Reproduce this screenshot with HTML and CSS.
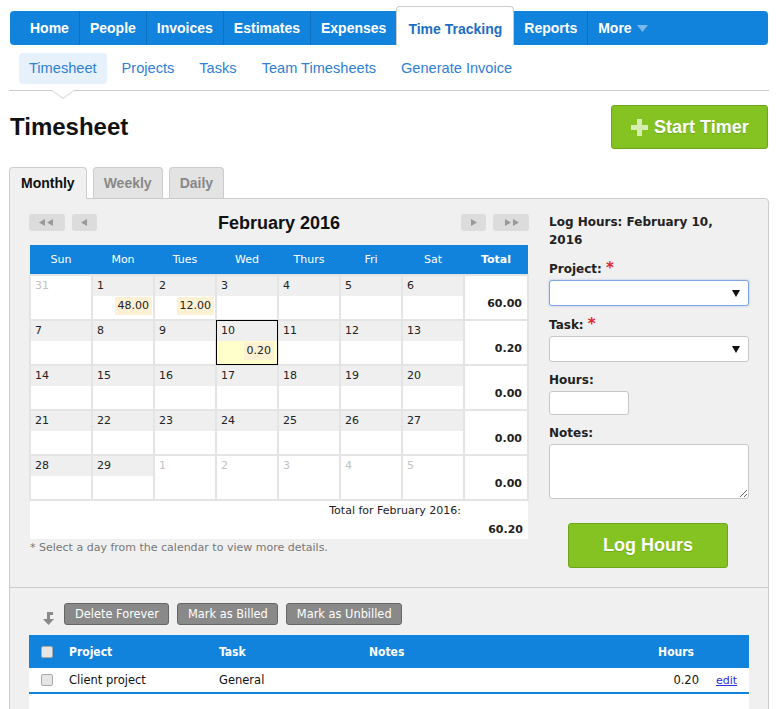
FILE: index.html
```html
<!DOCTYPE html>
<html>
    <head>
        <title>Timesheet</title>
        <meta name="viewport" content="width=device-width, initial-scale=1.0">
        <link rel="stylesheet" href="styles.css">
    </head>
    <body>
        <div class="page">

            <!-- main navigation -->
            <ul class="main-nav">
                <li>Home</li>
                <li>People</li>
                <li>Invoices</li>
                <li>Estimates</li>
                <li>Expenses</li>
                <li class="active">Time Tracking</li>
                <li>Reports</li>
                <li class="more">More
                    <svg width="11" height="7" viewBox="0 0 11 7"><polygon points="0,0 11,0 5.5,7" fill="#7cb8ec"/></svg>
                </li>
            </ul>

            <ul class="sub-nav">
                <li class="active">Timesheet</li>
                <li>Projects</li>
                <li>Tasks</li>
                <li>Team Timesheets</li>
                <li>Generate Invoice</li>
            </ul>

            <div class="title-row">
                <h1>Timesheet</h1>
                <button class="btn-green btn-timer">
                    <svg width="17" height="17" viewBox="0 0 17 17"><path d="M6 0h5v6h6v5h-6v6H6v-6H0V6h6z" fill="#d6edb4"/></svg>
                    Start Timer
                </button>
            </div>

            <div class="tabs">
                <span class="tab active">Monthly</span>
                <span class="tab">Weekly</span>
                <span class="tab">Daily</span>
            </div>

            <div class="panel">
                <div class="panel-top">

                    <div class="calendar">
                        <div class="cal-nav">
                            <span class="cal-btn wide">
                                <svg width="16" height="7" viewBox="0 0 16 7"><polygon points="0,3.5 6,0 6,7" fill="#999"/><polygon points="8,3.5 14,0 14,7" fill="#999"/></svg>
                            </span>
                            <span class="cal-btn">
                                <svg width="7" height="7" viewBox="0 0 7 7"><polygon points="0,3.5 6,0 6,7" fill="#999"/></svg>
                            </span>
                            <span class="cal-title">February 2016</span>
                            <span class="cal-btn">
                                <svg width="7" height="7" viewBox="0 0 7 7"><polygon points="1,0 7,3.5 1,7" fill="#999"/></svg>
                            </span>
                            <span class="cal-btn wide">
                                <svg width="16" height="7" viewBox="0 0 16 7"><polygon points="2,0 8,3.5 2,7" fill="#999"/><polygon points="10,0 16,3.5 10,7" fill="#999"/></svg>
                            </span>
                        </div>

                        <table class="cal">
                            <thead>
                                <tr>
                                    <th>Sun</th><th>Mon</th><th>Tues</th><th>Wed</th><th>Thurs</th><th>Fri</th><th>Sat</th><th class="total">Total</th>
                                </tr>
                            </thead>
                            <tbody>
                                <tr>
                                    <td class="other"><div class="day">31</div></td>
                                    <td><div class="day">1</div><div class="val"><span>48.00</span></div></td>
                                    <td><div class="day">2</div><div class="val"><span>12.00</span></div></td>
                                    <td><div class="day">3</div></td>
                                    <td><div class="day">4</div></td>
                                    <td><div class="day">5</div></td>
                                    <td><div class="day">6</div></td>
                                    <td class="total">60.00</td>
                                </tr>
                                <tr>
                                    <td><div class="day">7</div></td>
                                    <td><div class="day">8</div></td>
                                    <td><div class="day">9</div></td>
                                    <td class="selected"><div class="day">10</div><div class="val"><span>0.20</span></div></td>
                                    <td><div class="day">11</div></td>
                                    <td><div class="day">12</div></td>
                                    <td><div class="day">13</div></td>
                                    <td class="total">0.20</td>
                                </tr>
                                <tr>
                                    <td><div class="day">14</div></td>
                                    <td><div class="day">15</div></td>
                                    <td><div class="day">16</div></td>
                                    <td><div class="day">17</div></td>
                                    <td><div class="day">18</div></td>
                                    <td><div class="day">19</div></td>
                                    <td><div class="day">20</div></td>
                                    <td class="total">0.00</td>
                                </tr>
                                <tr>
                                    <td><div class="day">21</div></td>
                                    <td><div class="day">22</div></td>
                                    <td><div class="day">23</div></td>
                                    <td><div class="day">24</div></td>
                                    <td><div class="day">25</div></td>
                                    <td><div class="day">26</div></td>
                                    <td><div class="day">27</div></td>
                                    <td class="total">0.00</td>
                                </tr>
                                <tr>
                                    <td><div class="day">28</div></td>
                                    <td><div class="day">29</div></td>
                                    <td class="other"><div class="day">1</div></td>
                                    <td class="other"><div class="day">2</div></td>
                                    <td class="other"><div class="day">3</div></td>
                                    <td class="other"><div class="day">4</div></td>
                                    <td class="other"><div class="day">5</div></td>
                                    <td class="total">0.00</td>
                                </tr>
                            </tbody>
                            <tfoot>
                                <tr>
                                    <td colspan="7" class="month-label">Total for February 2016:</td>
                                    <td class="month-total">60.20</td>
                                </tr>
                            </tfoot>
                        </table>
                        <p class="note">* Select a day from the calendar to view more details.</p>
                    </div>

                    <form class="log-form">
                        <h3>Log Hours: February 10, 2016</h3>
                        <div class="field">
                            <label>Project: <span class="req">*</span></label>
                            <div class="select focus">
                                <select></select>
                                <svg class="caret" width="8" height="7" viewBox="0 0 8 7"><polygon points="0,0 8,0 4,7" fill="#111"/></svg>
                            </div>
                        </div>
                        <div class="field">
                            <label>Task: <span class="req">*</span></label>
                            <div class="select">
                                <select></select>
                                <svg class="caret" width="8" height="7" viewBox="0 0 8 7"><polygon points="0,0 8,0 4,7" fill="#111"/></svg>
                            </div>
                        </div>
                        <div class="field">
                            <label>Hours:</label>
                            <input type="text" class="hours">
                        </div>
                        <div class="field">
                            <label>Notes:</label>
                            <textarea class="notes"></textarea>
                        </div>
                        <button type="button" class="btn-green btn-log">Log Hours</button>
                    </form>
                </div>

                <div class="panel-bottom">
                    <div class="actions">
                        <span class="apply-icon">
                            <svg width="13" height="13" viewBox="0 0 13 13"><path d="M5 0h6v3H8v4h4l-5.5 6L1 7h4z" fill="#8a8a8a"/></svg>
                        </span>
                        <button type="button" class="btn-grey">Delete Forever</button>
                        <button type="button" class="btn-grey">Mark as Billed</button>
                        <button type="button" class="btn-grey">Mark as Unbilled</button>
                    </div>

                    <table class="entries">
                        <thead>
                            <tr>
                                <th class="col-check"><input type="checkbox"></th>
                                <th class="col-project">Project</th>
                                <th class="col-task">Task</th>
                                <th>Notes</th>
                                <th class="col-hours">Hours</th>
                                <th class="col-edit"></th>
                            </tr>
                        </thead>
                        <tbody>
                            <tr class="entry">
                                <td class="col-check"><input type="checkbox"></td>
                                <td>Client project</td>
                                <td>General</td>
                                <td></td>
                                <td class="col-hours">0.20</td>
                                <td class="col-edit"><a href="#">edit</a></td>
                            </tr>
                            <tr class="spacer"><td colspan="6"></td></tr>
                        </tbody>
                    </table>
                </div>
            </div>
        </div>
    </body>
</html>
```

FILE: styles.css
```css
/* ---- General ---- */
* {
    box-sizing: border-box;
}

body {
    margin: 0;
    background-color: #fff;
    color: #222;
    font-family: 'DejaVu Sans', Verdana, sans-serif;
    font-size: 11px;
}

.page {
    padding: 0 15px 0 9px;
}

button {
    cursor: pointer;
}


/* ---- Navigation ---- */
.main-nav {
    background-color: #1183dd;
    border-radius: 4px;
    display: flex;
    font-family: 'Liberation Sans', Arial, sans-serif;
    font-size: 14px;
    font-weight: bold;
    height: 34px;
    list-style: none;
    margin: 11px 1px 0;
    padding: 0 0 0 10px;
}

.main-nav li {
    align-items: center;
    color: #fff;
    display: flex;
    padding: 0 10px;
}

.main-nav li + li {
    border-left: 1px solid #0c70c2;
}

.main-nav li.active {
    background-color: #fff;
    border: 1px solid #ccc;
    border-bottom: 0;
    border-radius: 4px 4px 0 0;
    color: #1b6fc6;
    margin-top: -5px;
    padding: 6px 11px 0 11px;
}

.main-nav li.active + li {
    border-left: 0;
}

.main-nav .more {
    padding-right: 7px;
}

.main-nav .more svg {
    margin-left: 5px;
    margin-top: 1px;
}

.sub-nav {
    border-bottom: 1px solid #ccc;
    display: flex;
    font-family: 'Liberation Sans', Arial, sans-serif;
    font-size: 14.6px;
    gap: 5px;
    list-style: none;
    margin: 0;
    padding: 8px 0 6px 10px;
}

.sub-nav li {
    border-radius: 4px;
    color: #2f80d6;
    line-height: 31px;
    padding: 0 10px;
    position: relative;
}

.sub-nav li.active {
    background-color: #e6f1fc;
}

/* little pointer under the active sub item */
.sub-nav li.active::before,
.sub-nav li.active::after {
    border-left: 12px solid transparent;
    border-right: 12px solid transparent;
    border-top: 9px solid #ccc;
    content: "";
    left: 50%;
    margin-left: -12px;
    position: absolute;
    top: 37px;
}

.sub-nav li.active::after {
    border-left-width: 11px;
    border-right-width: 11px;
    border-top: 8px solid #fff;
    margin-left: -11px;
}


/* ---- Title ---- */
.title-row {
    align-items: center;
    display: flex;
    justify-content: space-between;
    margin-top: 14px;
    padding-left: 1px;
}

h1 {
    color: #111;
    font-family: 'Liberation Sans', Arial, sans-serif;
    font-size: 24px;
    margin: 0;
}

.btn-green {
    background-color: #85c322;
    border: 1px solid #6ea51c;
    border-radius: 3px;
    color: #fff;
    font-family: 'Liberation Sans', Arial, sans-serif;
    font-size: 18px;
    font-weight: bold;
    text-shadow: 0 1px 1px rgba(0, 0, 0, 0.15);
    white-space: nowrap;
}

.btn-timer {
    align-items: center;
    display: flex;
    gap: 6px;
    height: 44px;
    margin-right: 1px;
    padding: 0 0 0 19px;
    width: 157px;
}


/* ---- Tabs + panel ---- */
.tabs {
    align-items: flex-start;
    display: flex;
    gap: 6px;
    height: 31px;
    margin-top: 18px;
}

.tab {
    background-color: #e3e3e3;
    border: 1px solid #ccc;
    border-bottom: 0;
    border-radius: 4px 4px 0 0;
    color: #888;
    font-family: 'Liberation Sans', Arial, sans-serif;
    font-size: 14px;
    font-weight: bold;
    height: 31px;
    line-height: 31px;
    padding: 0 10px;
}

.tab.active {
    background-color: #f0f0f0;
    color: #111;
    height: 32px;
    padding: 0 11px;
    position: relative;
    z-index: 1;
}

.panel {
    background-color: #f0f0f0;
    border: 1px solid #ccc;
    border-radius: 0 4px 0 0;
}

.panel-top {
    display: flex;
    gap: 20px;
    padding: 15px 19px 19px;
}


/* ---- Calendar ---- */
.calendar {
    width: 500px;
}

.cal-nav {
    align-items: center;
    display: flex;
    gap: 7px;
    height: 17px;
    margin-bottom: 14px;
}

.cal-btn {
    align-items: center;
    background-color: #dcdcdc;
    border-radius: 3px;
    display: flex;
    height: 17px;
    justify-content: center;
    width: 25px;
}

.cal-btn.wide {
    width: 36px;
}

.cal-title {
    color: #111;
    flex: 1;
    font-family: 'Liberation Sans', Arial, sans-serif;
    font-size: 18px;
    font-weight: bold;
    padding-top: 2px;
    text-align: center;
}

.cal {
    border-collapse: collapse;
    table-layout: fixed;
    width: 500px;
}

.cal th {
    background-color: #1183dd;
    color: #fff;
    font-weight: normal;
    height: 30px;
    padding: 0;
    width: 62px;
}

.cal th.total {
    font-weight: bold;
    width: 64px;
}

.cal td {
    background-color: #fff;
    border: 2px solid #e4e4e4;
    height: 45px;
    padding: 0;
    vertical-align: top;
}

.cal .day {
    background-color: #efefef;
    color: #222;
    height: 20px;
    line-height: 20px;
    padding-left: 4px;
}

.cal .other .day {
    background-color: transparent;
    color: #c2c2c2;
}

.cal .val {
    padding: 1px 1px 0 0;
    text-align: right;
}

.cal .val span {
    background-color: #fcf1d2;
    display: inline-block;
    height: 18px;
    line-height: 18px;
    padding: 0 3px;
}

.cal td.selected {
    background-color: #ffffcc;
    outline: 1px solid #000;
    outline-offset: -1px;
}

.cal td.selected .val {
    padding-right: 3px;
}

.cal td.total {
    font-weight: bold;
    padding: 21px 5px 0 0;
    text-align: right;
}

.cal tfoot td {
    border: 0;
    height: 39px;
}

.cal .month-label {
    padding: 3px 3px 0 0;
    text-align: right;
}

.cal .month-total {
    font-weight: bold;
    padding: 22px 5px 0 0;
    text-align: right;
}

.note {
    color: #777;
    margin: 2px 0 0 1px;
}


/* ---- Log form ---- */
.log-form {
    width: 200px;
}

.log-form h3 {
    font-size: 12px;
    line-height: 18px;
    margin: -1px 0 11px;
}

.field {
    margin-bottom: 10px;
}

.field label {
    display: block;
    font-size: 12px;
    font-weight: bold;
    line-height: 16px;
    margin-bottom: 3px;
}

.req {
    color: #e0262b;
    font-size: 15px;
}

.select {
    position: relative;
}

.select select {
    appearance: none;
    background-color: #fff;
    border: 1px solid #c8c8c8;
    border-radius: 3px;
    display: block;
    height: 26px;
    width: 200px;
}

.select.focus select {
    border-color: #7fa7e8;
    box-shadow: 0 0 2px rgba(70, 120, 220, 0.5);
}

.select .caret {
    position: absolute;
    right: 9px;
    top: 10px;
}

.hours {
    background-color: #fff;
    border: 1px solid #c8c8c8;
    border-radius: 3px;
    display: block;
    height: 24px;
    width: 80px;
}

.notes {
    background-color: #fff;
    border: 1px solid #c8c8c8;
    border-radius: 3px;
    display: block;
    height: 55px;
    width: 200px;
}

.btn-log {
    display: block;
    height: 45px;
    margin: 24px 0 0 19px;
    width: 160px;
}


/* ---- Entries ---- */
.panel-bottom {
    border-top: 1px solid #ccc;
    padding: 15px 19px 0;
}

.actions {
    align-items: flex-end;
    display: flex;
    gap: 8px;
    height: 22px;
}

.apply-icon {
    display: flex;
    padding-left: 13px;
    width: 27px;
}

.btn-grey {
    background-color: #898989;
    border: 1px solid #666;
    border-radius: 3px;
    color: #fff;
    font-family: 'DejaVu Sans', Verdana, sans-serif;
    font-size: 11.4px;
    height: 22px;
    padding: 0 9px 0 10px;
}

.entries {
    border-collapse: collapse;
    margin-top: 10px;
    width: 720px;
}

.entries th {
    background-color: #1183dd;
    color: #fff;
    font-family: 'DejaVu Sans Condensed', 'DejaVu Sans', sans-serif;
    font-size: 12px;
    font-weight: bold;
    height: 33px;
    padding: 0;
    text-align: left;
}

.entries td {
    background-color: #fff;
    color: #111;
    font-size: 11.5px;
    height: 25px;
    padding: 0;
}

.entries .entry td {
    border-bottom: 2px solid #1183dd;
}

.entries .spacer td {
    height: 20px;
}

.entries .col-check {
    padding-left: 12px;
    width: 40px;
}

.col-project,
.col-task {
    width: 150px;
}

.entries .col-hours {
    padding-right: 1px;
    text-align: right;
    width: 80px;
}

.entries th.col-hours {
    padding-right: 6px;
}

.entries .col-edit {
    padding-left: 16px;
    width: 49px;
}

.col-edit a {
    color: #2b2be0;
    font-size: 11px;
}

.entries input[type="checkbox"] {
    appearance: none;
    background-color: #e6e6e6;
    border: 1px solid #a8a8a8;
    border-radius: 2px;
    display: block;
    height: 12px;
    margin: 0;
    width: 12px;
}
```
